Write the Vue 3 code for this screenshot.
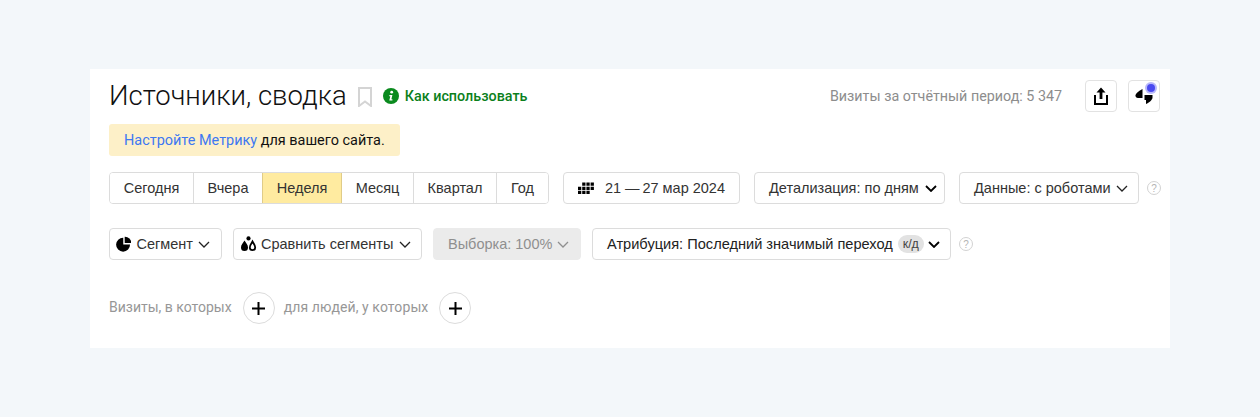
<script setup>
const periods = [
  { label: 'Сегодня', width: 84 },
  { label: 'Вчера', width: 69 },
  { label: 'Неделя', width: 79, active: true },
  { label: 'Месяц', width: 72 },
  { label: 'Квартал', width: 83 },
  { label: 'Год', width: 51 }
]
</script>

<template>
  <div class="page">
    <section class="card">
      <header class="head">
        <h1 class="title">Источники, сводка</h1>
        <svg class="bookmark" width="14" height="20" viewBox="0 0 14 20">
          <path d="M1 1h12v18l-6-4.500L1 19z" fill="#fff" stroke="#d4d4d4" stroke-width="2" />
        </svg>
        <svg class="info" width="16" height="16" viewBox="0 0 16 16">
          <circle cx="8" cy="8" r="8" fill="#0a8a1e" />
          <circle cx="8.700" cy="4.200" r="1.400" fill="#fff" />
          <path d="M6.400 7h3l-1 4.200h1V12.600H6.300l1-4.400h-1z" fill="#fff" />
        </svg>
        <a class="howto">Как использовать</a>
        <span class="visits">Визиты за отчётный период: 5 347</span>
        <button class="square share">
          <svg width="14" height="18" viewBox="0 0 14 18">
            <path d="M7 0.500l4.500 5H8.400v6.500H5.600V5.500H2.500z" fill="#000" />
            <path d="M1 8v9h12V8" fill="none" stroke="#000" stroke-width="2" />
          </svg>
        </button>
        <button class="square quote">
          <svg width="18" height="16" viewBox="0 0 18 16">
            <path d="M7.500 1V10H3C1.300 10 0.500 8.800 0.500 7.500C0.500 5.500 3 3.500 7.500 1z" fill="#000" />
            <path d="M9.500 7H17.500V9.500C17.500 12 14 14.500 11 16V12H9.500z" fill="#000" />
          </svg>
          <span class="dot"></span>
        </button>
      </header>

      <div class="notice">
        <a class="link">Настройте Метрику</a>&nbsp;для вашего сайта.
      </div>

      <div class="row period-row">
        <div class="tabs">
          <button
            v-for="p in periods"
            :key="p.label"
            class="tab"
            :class="{ active: p.active }"
            :style="{ width: p.width + 'px' }"
          >{{ p.label }}</button>
        </div>
        <button class="btn date">
          <svg class="grid" width="17" height="13" viewBox="0 0 17 13" fill="#000">
            <path d="M4.500 0h3.500v3.500H4.500zM9 0h3.500v3.500H9zM13.500 0h3.500v3.500h-3.500zM0 4.500h3.500v3.500H0zM4.500 4.500h3.500v3.500H4.500zM9 4.500h3.500v3.500H9zM13.500 4.500h3.500v3.500h-3.500zM0 9h3.500v3.500H0zM4.500 9h3.500v3.500H4.500zM9 9h3.500v3.500H9z" />
          </svg>
          <span>21 —&#8201;27 мар 2024</span>
        </button>
        <button class="btn detail">
          Детализация: по дням
          <svg class="chev bold" width="12" height="7" viewBox="0 0 12 7"><path d="M1 1l5 5 5-5" /></svg>
        </button>
        <button class="btn data">
          Данные: с роботами
          <svg class="chev" width="12" height="7" viewBox="0 0 12 7"><path d="M1 1l5 5 5-5" /></svg>
        </button>
        <span class="help first">?</span>
      </div>

      <div class="row segment-row">
        <button class="btn segment">
          <svg width="16" height="16" viewBox="0 0 16 16" fill="#000">
            <path d="M7.500 1.500A7.200 7.200 0 1 0 14.500 8.500H7.500z" />
            <path d="M9 0.500A6.500 6.500 0 0 1 15.800 7H9z" />
          </svg>
          Сегмент
          <svg class="chev" width="12" height="7" viewBox="0 0 12 7"><path d="M1 1l5 5 5-5" /></svg>
        </button>
        <button class="btn compare">
          <svg width="18" height="16" viewBox="0 0 18 16">
            <path d="M4.500 4.500C3 7 1 8.800 1 11.500a3.500 3.500 0 0 0 7 0C8 8.800 6 7 4.500 4.500z" fill="#000" />
            <circle cx="8.500" cy="2.400" r="2.100" fill="#000" />
            <path d="M12.500 5.500C11.500 7.500 9.800 9 9.800 11.500a2.700 2.700 0 0 0 5.400 0C15.200 9 13.500 7.500 12.500 5.500z" fill="#fff" stroke="#000" stroke-width="1.800" />
          </svg>
          Сравнить сегменты
          <svg class="chev" width="12" height="7" viewBox="0 0 12 7"><path d="M1 1l5 5 5-5" /></svg>
        </button>
        <button class="btn sample">
          Выборка: 100%
          <svg class="chev muted" width="12" height="7" viewBox="0 0 12 7"><path d="M1 1l5 5 5-5" /></svg>
        </button>
        <button class="btn attribution">
          <span class="attr-text">Атрибуция: Последний значимый переход</span>
          <span class="tag">к/д</span>
          <svg class="chev bold" width="12" height="7" viewBox="0 0 12 7"><path d="M1 1l5 5 5-5" /></svg>
        </button>
        <span class="help second">?</span>
      </div>

      <div class="row filter-row">
        <span class="cond">Визиты, в которых</span>
        <button class="plus"><svg width="13" height="13" viewBox="0 0 13 13"><path d="M6.500 0v13M0 6.500h13" /></svg></button>
        <span class="cond people">для людей, у которых</span>
        <button class="plus"><svg width="13" height="13" viewBox="0 0 13 13"><path d="M6.500 0v13M0 6.500h13" /></svg></button>
      </div>
    </section>
  </div>
</template>

<style>
body {
  margin: 0;
  background: #f3f7fa;
}
</style>

<style scoped>
.page {
  height: 417px;
  padding: 69px 90px 0;
  box-sizing: border-box;
  font-family: 'Liberation Sans', Arial, sans-serif;
  font-size: 14.5px;
  color: #1f1f1f;
}

.card {
  height: 279px;
  box-sizing: border-box;
  padding: 11px 10px 0 19px;
  background: #fff;
}

button {
  font: inherit;
  color: inherit;
  margin: 0;
  background: #fff;
}

.head {
  display: flex;
  align-items: center;
  height: 32px;
}

.title {
  margin: 0;
  font-family: Roboto, sans-serif;
  font-weight: 300;
  font-size: 27.500px;
  line-height: 32px;
  color: #111;
}

.bookmark {
  margin: 2px 0 0 11px;
}

.info {
  margin: 0 0 0 11px;
}

.howto {
  margin-left: 6px;
  font-family: Roboto, sans-serif;
  font-weight: 500;
  font-size: 14.350px;
  color: #0b7f1c;
}

.visits {
  margin-left: auto;
  margin-right: 23px;
  font-family: Roboto, sans-serif;
  font-size: 14.300px;
  color: #8d8d8d;
}

.square {
  position: relative;
  display: flex;
  align-items: center;
  justify-content: center;
  width: 32px;
  height: 32px;
  padding: 0;
  border: 1px solid #e2e2e2;
  border-radius: 4px;
}

.quote {
  margin-left: 11px;
}

.dot {
  position: absolute;
  top: 3px;
  right: 4px;
  width: 8px;
  height: 8px;
  border-radius: 50%;
  background: #4a4af0;
  box-shadow: 0 0 0 2px #b9b9fa;
}

.notice {
  display: flex;
  align-items: center;
  width: 291px;
  height: 32px;
  box-sizing: border-box;
  margin-top: 12px;
  padding-left: 15px;
  border-radius: 3px;
  background: #fdf0c8;
  font-family: Roboto, sans-serif;
  font-size: 14.450px;
  color: #111;
}

.link {
  color: #3e78f2;
}

.row {
  display: flex;
  align-items: center;
}

.period-row {
  margin-top: 16px;
}

.tabs {
  display: flex;
  flex-shrink: 0;
  height: 32px;
  box-sizing: border-box;
  border: 1px solid #dcdcdc;
  border-radius: 4px;
  overflow: hidden;
}

.tab {
  height: 30px;
  padding: 0;
  border: 0;
  border-right: 1px solid #dcdcdc;
  color: #333;
}

.tab:last-child {
  border-right: 0;
}

.tab.active {
  background: #ffeba0;
  box-shadow: -1px 0 0 #e0cc88;
  border-right-color: #e0cc88;
}

.btn {
  display: flex;
  flex-shrink: 0;
  align-items: center;
  height: 32px;
  box-sizing: border-box;
  padding: 0 14px;
  border: 1px solid #dcdcdc;
  border-radius: 4px;
  white-space: nowrap;
  color: #333;
}

.chev {
  flex-shrink: 0;
  fill: none;
  stroke: #222;
  stroke-width: 1.300;
}

.chev.bold {
  stroke: #000;
  stroke-width: 1.800;
}

.chev.muted {
  stroke: #8f8f8f;
}

.date {
  width: 177px;
  margin-left: 14px;
}

.date .grid {
  margin-right: 11px;
}

.detail {
  width: 191px;
  margin-left: 14px;
  padding-right: 7px;
  justify-content: space-between;
}

.data {
  width: 180px;
  margin-left: 14px;
  padding-right: 10px;
  justify-content: space-between;
}

.help {
  display: flex;
  flex-shrink: 0;
  align-items: center;
  justify-content: center;
  width: 12px;
  height: 12px;
  border: 1px solid #d2d2d2;
  border-radius: 50%;
  font-size: 10px;
  color: #b4b4b4;
}

.help.first {
  margin-left: 8px;
}

.help.second {
  margin-left: 8px;
}

.segment-row {
  margin-top: 24px;
}

.segment {
  width: 113px;
  padding: 0 11px 0 6px;
  gap: 5px;
}

.segment .chev {
  margin-left: auto;
}

.compare {
  width: 189px;
  margin-left: 11px;
  padding: 0 10px 0 6px;
  gap: 3px;
}

.compare .chev {
  margin-left: auto;
}

.sample {
  width: 148px;
  margin-left: 11px;
  padding-right: 11px;
  justify-content: space-between;
  border-color: #ebebeb;
  background: #ebebeb;
  color: #8f8f8f;
}

.attribution {
  width: 359px;
  margin-left: 11px;
  padding-right: 0;
  color: #222;
}

.attr-text {
  font-size: 14.600px;
}

.tag {
  flex-shrink: 0;
  box-sizing: border-box;
  width: 26px;
  margin-left: 5px;
  padding: 2px 0;
  border-radius: 9px;
  background: #e2e2e2;
  text-align: center;
  font-size: 12.500px;
  line-height: 14px;
  color: #444;
}

.attribution .chev {
  margin-left: 4px;
}

.filter-row {
  margin-top: 32px;
  color: #979797;
  font-family: Roboto, sans-serif;
  font-size: 14px;
}

.cond {
  padding-bottom: 3px;
}

.plus {
  display: flex;
  align-items: center;
  justify-content: center;
  width: 32px;
  height: 32px;
  margin-left: 11px;
  padding: 0;
  border: 1px solid #dcdcdc;
  border-radius: 50%;
}

.plus path {
  stroke: #000;
  stroke-width: 2;
}

.people {
  margin-left: 9px;
  letter-spacing: 0.100px;
}
</style>
